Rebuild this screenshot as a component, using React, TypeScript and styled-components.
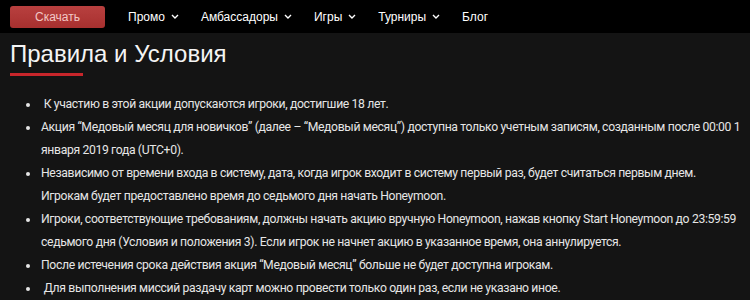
import styled, { createGlobalStyle } from 'styled-components';

const GlobalStyle = createGlobalStyle`
  body {
    margin: 0;
    background-color: #141414;
    font-family: "Liberation Sans", Arial, sans-serif;
  }
`;

const Navbar = styled.div`
  display: flex;
  align-items: center;
  height: 33px;
  padding: 0 10px;
  background-color: #000;
`;

const DownloadButton = styled.button`
  width: 95px;
  height: 22px;
  margin-right: 23px;
  border: none;
  border-radius: 3px;
  background: linear-gradient(#b8403f, #a8302f);
  color: #f2c8c6;
  font-family: inherit;
  font-size: 12px;
  cursor: pointer;
`;

const NavItem = styled.div`
  display: flex;
  align-items: center;
  gap: 6px;
  margin-right: 22px;
  color: #fff;
  font-size: 12px;
`;

const Content = styled.div`
  padding: 6px 2px 0 10px;
`;

const Title = styled.h1`
  margin: 0;
  color: #f4f4f4;
  font-size: 24px;
  font-weight: normal;
  line-height: 30px;
`;

const Underline = styled.div`
  width: 73px;
  height: 3px;
  margin-top: 4px;
  background-color: #c8262b;
`;

const Rules = styled.ul`
  margin: 17px 0 0;
  padding-left: 30px;
  color: #e6e6e6;
  font-family: Roboto, "Noto Sans", sans-serif;
  font-size: 12.2px;
  letter-spacing: -0.35px;
  line-height: 23px;
`;

const Rule = styled.li`
  padding-left: 1px;
`;

function Chevron() {
  return (
    <svg width="8" height="5" viewBox="0 0 8 5" fill="none" stroke="#fff" strokeWidth="1.4">
      <path d="M1 1l3 3 3-3" />
    </svg>
  );
}

const navItems: { label: string; dropdown: boolean }[] = [
  { label: 'Промо', dropdown: true },
  { label: 'Амбассадоры', dropdown: true },
  { label: 'Игры', dropdown: true },
  { label: 'Турниры', dropdown: true },
  { label: 'Блог', dropdown: false },
];

// each rule is a list of lines; the site breaks some rules by hand
const rules: string[][] = [
  ['\u00a0К участию в этой акции допускаются игроки, достигшие 18 лет.'],
  ['Акция “Медовый месяц для новичков” (далее – “Медовый месяц”) доступна только учетным записям, созданным после 00:00 1 января 2019 года (UTC+0).'],
  [
    'Независимо от времени входа в систему, дата, когда игрок входит в систему первый раз, будет считаться первым днем.',
    'Игрокам будет предоставлено время до седьмого дня начать Honeymoon.',
  ],
  ['Игроки, соответствующие требованиям, должны начать акцию вручную Honeymoon, нажав кнопку Start Honeymoon до 23:59:59 седьмого дня (Условия и положения 3). Если игрок не начнет акцию в указанное время, она аннулируется.'],
  ['После истечения срока действия акция “Медовый месяц” больше не будет доступна игрокам.'],
  ['\u00a0Для выполнения миссий раздачу карт можно провести только один раз, если не указано иное.'],
];

function App() {
  return (
    <>
      <GlobalStyle />
      <Navbar>
        <DownloadButton>Скачать</DownloadButton>
        {navItems.map(item => (
          <NavItem key={item.label}>
            {item.label}
            {item.dropdown && <Chevron />}
          </NavItem>
        ))}
      </Navbar>
      <Content>
        <Title>Правила и Условия</Title>
        <Underline />
        <Rules>
          {rules.map((lines, i) => (
            <Rule key={i}>
              {lines.map((line, j) => (
                <span key={j}>
                  {j > 0 && <br />}
                  {line}
                </span>
              ))}
            </Rule>
          ))}
        </Rules>
      </Content>
    </>
  );
}

export default App;
